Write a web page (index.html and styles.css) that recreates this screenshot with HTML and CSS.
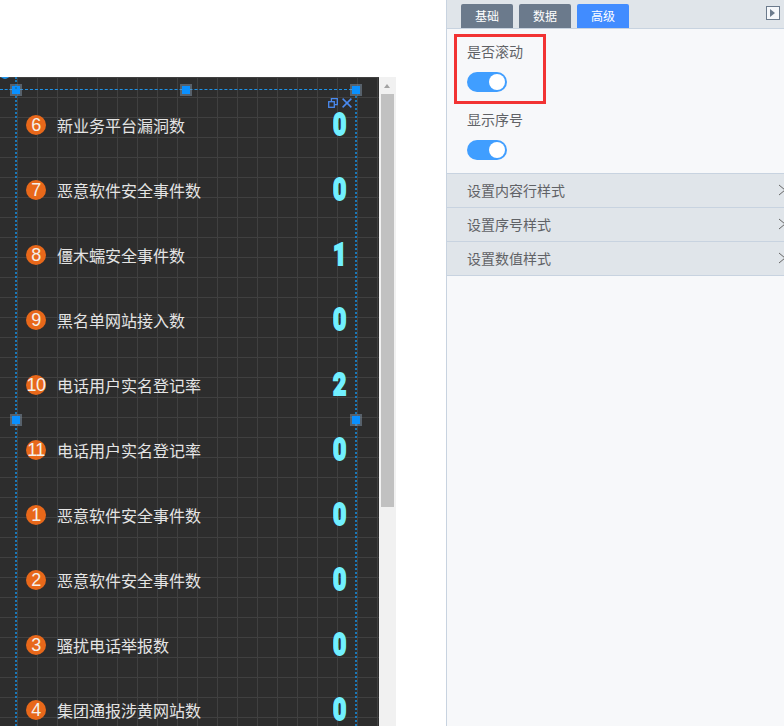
FILE: index.html
```html
<!DOCTYPE html>
<html lang="zh-CN">
<head>
  <meta charset="UTF-8" />
  <title>大屏编辑器</title>
  <link rel="stylesheet" href="styles.css">
</head>
<body>
  <div class="stage">
    <div class="canvas-row">
      <div class="canvas">
        <div class="rotate-handle"></div>
        <ul class="rank-list">
          <li class="rank-row"><span class="rank-no">6</span><span class="rank-name">新业务平台漏洞数</span><span class="rank-val">0</span></li>
          <li class="rank-row"><span class="rank-no">7</span><span class="rank-name">恶意软件安全事件数</span><span class="rank-val">0</span></li>
          <li class="rank-row"><span class="rank-no">8</span><span class="rank-name">僵木蠕安全事件数</span><span class="rank-val">1</span></li>
          <li class="rank-row"><span class="rank-no">9</span><span class="rank-name">黑名单网站接入数</span><span class="rank-val">0</span></li>
          <li class="rank-row"><span class="rank-no">10</span><span class="rank-name">电话用户实名登记率</span><span class="rank-val">2</span></li>
          <li class="rank-row"><span class="rank-no">11</span><span class="rank-name">电话用户实名登记率</span><span class="rank-val">0</span></li>
          <li class="rank-row"><span class="rank-no">1</span><span class="rank-name">恶意软件安全事件数</span><span class="rank-val">0</span></li>
          <li class="rank-row"><span class="rank-no">2</span><span class="rank-name">恶意软件安全事件数</span><span class="rank-val">0</span></li>
          <li class="rank-row"><span class="rank-no">3</span><span class="rank-name">骚扰电话举报数</span><span class="rank-val">0</span></li>
          <li class="rank-row"><span class="rank-no">4</span><span class="rank-name">集团通报涉黄网站数</span><span class="rank-val">0</span></li>
        </ul>

        <div class="select-box">
          <i class="handle h-tl"></i>
          <i class="handle h-tm"></i>
          <i class="handle h-tr"></i>
          <i class="handle h-ml"></i>
          <i class="handle h-mr"></i>
          <div class="box-tools">
            <svg width="10" height="10" viewBox="0 0 10 10" fill="none" stroke="#4a8af0" stroke-width="1.3"><rect x="0.7" y="3.7" width="5.6" height="5.6"/><path d="M3.4 3.4V0.7H9.3V6.6H6.4"/></svg>
            <svg width="10" height="10" viewBox="0 0 10 10" fill="none" stroke="#4a8af0" stroke-width="1.5"><path d="M0.6 0.6L9.4 9.4M9.4 0.6L0.6 9.4"/></svg>
          </div>
        </div>
      </div>
      <div class="scrollbar">
        <div class="scroll-up"></div>
        <div class="scroll-thumb"></div>
      </div>
    </div>
  </div>

  <aside class="panel">
    <div class="tabs">
      <span class="tab">基础</span>
      <span class="tab">数据</span>
      <span class="tab active">高级</span>
      <span class="collapse-btn"></span>
    </div>

    <div class="fields">
      <div class="field">
        <div class="field-label">是否滚动</div>
        <div class="switch"></div>
      </div>
      <div class="field">
        <div class="field-label">显示序号</div>
        <div class="switch"></div>
      </div>
    </div>

    <div class="group">设置内容行样式<svg class="chev" width="8" height="12" viewBox="0 0 8 12" fill="none" stroke="#666" stroke-width="1"><path d="M1 1L7 6L1 11"/></svg></div>
    <div class="group">设置序号样式<svg class="chev" width="8" height="12" viewBox="0 0 8 12" fill="none" stroke="#666" stroke-width="1"><path d="M1 1L7 6L1 11"/></svg></div>
    <div class="group">设置数值样式<svg class="chev" width="8" height="12" viewBox="0 0 8 12" fill="none" stroke="#666" stroke-width="1"><path d="M1 1L7 6L1 11"/></svg></div>

    <div class="red-mark"></div>
  </aside>
</body>
</html>
```

FILE: styles.css
```css
* { box-sizing: border-box; }
html, body { height: 100%; }
body {
  margin: 0; display: flex; height: 726px; overflow: hidden; background: #fff;
  font-family: "Noto Sans CJK SC", "Noto Sans", sans-serif;
}

/* left: canvas */
.stage { width: 446px; flex: none; padding-top: 77px; }
.canvas-row { display: flex; width: 396px; height: 649px; }
.canvas {
  position: relative; width: 379px; overflow: hidden;
  background-color: #2d2d2d;
  background-image:
    linear-gradient(#404040 1px, transparent 1px),
    linear-gradient(90deg, #404040 1px, transparent 1px);
  background-size: 20px 20px;
  background-position: 0 0, 17px 0;
}
.rank-list { list-style: none; margin: 0; padding: 15px 0 0 26px; }
.rank-row { display: flex; align-items: center; height: 65px; width: 321px; color: #e4e4e4; font-size: 16px; }
.rank-no {
  width: 20px; height: 20px; flex: none; border-radius: 50%; background: #e8681a; color: #f4f0ea;
  font-family: "Liberation Sans", sans-serif; font-size: 18px; line-height: 20px; text-align: center;
  letter-spacing: -0.5px;
}
.rank-name { margin-left: 11px; flex: 1; line-height: 20px; }
.rank-val {
  width: 16px; text-align: center; color: #71f0ff;
  font-family: Roboto, "Liberation Sans", sans-serif; font-weight: 900; font-size: 31px; line-height: 28px;
  -webkit-text-stroke: 1.8px #71f0ff; transform: scale(0.74, 1.04);
}

/* selection frame */
.select-box {
  position: absolute; left: 15px; top: 12px; width: 342px; height: 700px;
  border-top: 1px dashed #1f93e8;
  border-left: 2px dotted #1a78b8; border-right: 2px dotted #1a78b8;
}
.select-box::before {
  content: ""; position: absolute; left: -17px; top: -1px; width: 17px;
  border-top: 1px dashed #1f93e8;
}
.select-box::after {
  content: ""; position: absolute; left: -2px; top: -13px; height: 12px;
  border-left: 2px dotted #1a78b8;
}
.handle {
  position: absolute; width: 8px; height: 8px; background: #0a90ff;
  box-shadow: 0 0 0 2px rgba(130, 150, 170, .5);
}
.h-tl { left: -5px; top: -4px; }
.h-tm { left: 165px; top: -4px; }
.h-tr { right: -5px; top: -4px; }
.h-ml { left: -5px; top: 326px; }
.h-mr { right: -5px; top: 326px; }
.box-tools {
  position: absolute; right: 3px; top: 8px; display: flex; align-items: center; gap: 4px;
}
.rotate-handle {
  position: absolute; left: 0; top: -8px; width: 10px; height: 10px;
  border: 2px solid #1f93e8; border-radius: 50%;
}

/* scrollbar */
.scrollbar { position: relative; width: 17px; background: #f1f1f1; padding-top: 17px; }
.scroll-up {
  position: absolute; left: 5px; top: 7px; width: 0; height: 0;
  border: 3.5px solid transparent; border-top: 0; border-bottom: 4px solid #a3a3a3;
}
.scroll-thumb { width: 13px; height: 413px; margin-left: 2px; background: #c1c1c1; }

/* right: settings panel */
.panel {
  position: relative; flex: 1; background: #f7f8fa; border-left: 1px solid #c8d3e0;
  color: #606266; font-size: 14px;
}
.tabs {
  position: relative; display: flex; gap: 6px; align-items: flex-end;
  height: 29px; padding-left: 14px; background: #e0e5ea; border-bottom: 1px solid #c8d3e0;
}
.tab {
  width: 52px; height: 24px; background: #6b7a8c; color: #fff; font-size: 12px;
  line-height: 24px; text-align: center; border-radius: 2px 2px 0 0;
}
.tab.active { background: #418cff; }
.collapse-btn {
  position: absolute; left: 319px; top: 6px; width: 14px; height: 14px;
  background: #f5f7fa; border: 1px solid #6b7a8c;
}
.collapse-btn::after {
  content: ""; position: absolute; left: 3px; top: 2px; width: 0; height: 0;
  border: 4px solid transparent; border-right: 0; border-left: 5px solid #6b7a8c;
}
.fields { height: 144px; padding: 12px 0 0 20px; }
.field { height: 68px; }
.field-label { height: 21px; line-height: 21px; margin-bottom: 10px; }
.switch { position: relative; width: 40px; height: 20px; border-radius: 10px; background: #409eff; }
.switch::after {
  content: ""; position: absolute; right: 2px; top: 2px; width: 16px; height: 16px;
  border-radius: 50%; background: #fff;
}
.group {
  position: relative; height: 34px; padding-left: 20px; line-height: 32px;
  background: #e0e5ea; border-bottom: 1px solid #c8d3e0;
}
.fields + .group { border-top: 1px solid #c8d3e0; height: 35px; }
.chev { position: absolute; left: 331px; top: 10px; }
.red-mark {
  position: absolute; left: 7px; top: 34px; width: 92px; height: 70px;
  border: 3px solid #f23333;
}
```
